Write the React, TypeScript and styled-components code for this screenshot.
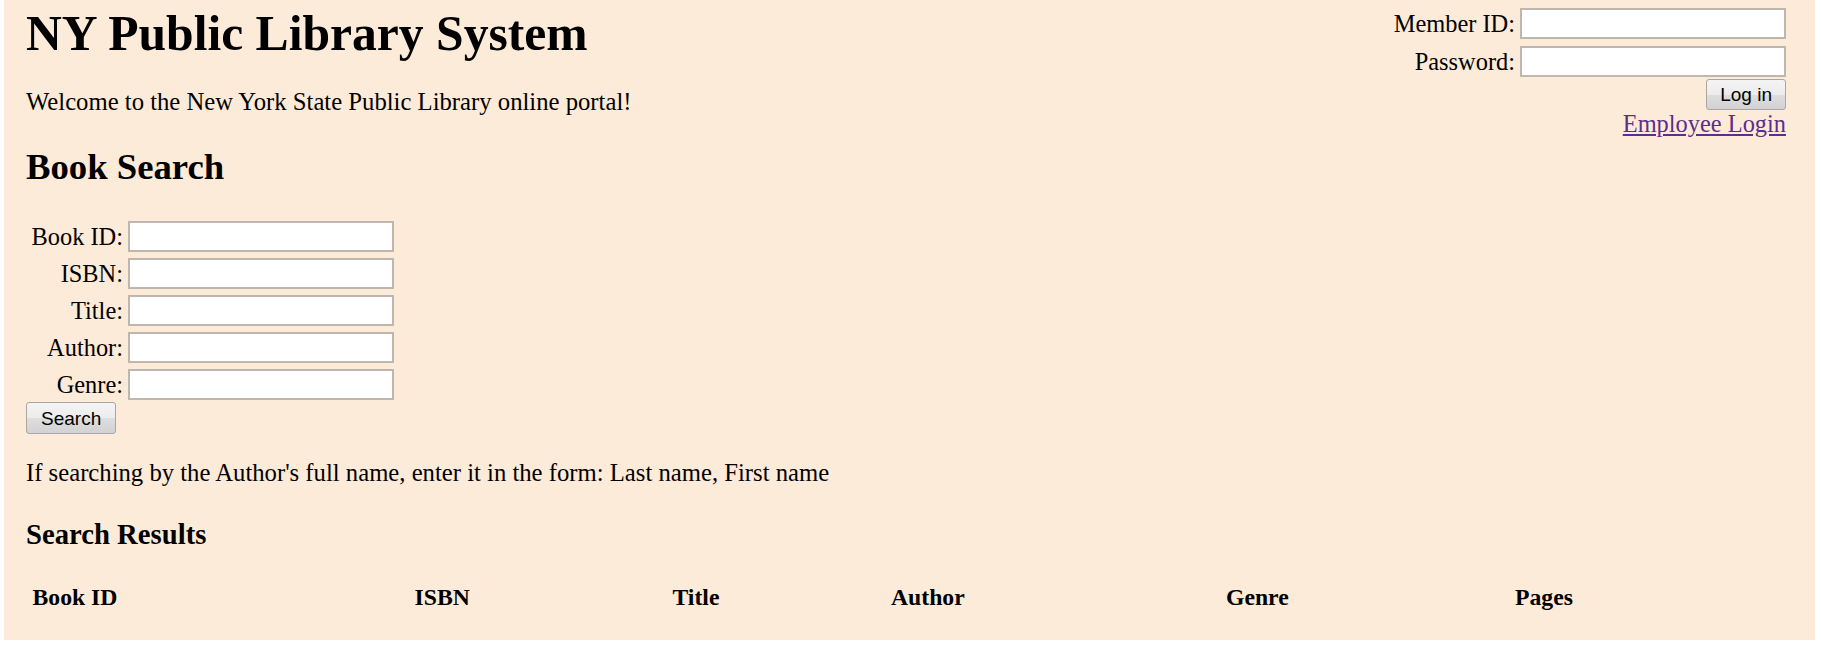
import React from "react";
import styled, { createGlobalStyle } from "styled-components";

const GlobalStyle = createGlobalStyle`
  html, body {
    margin: 0;
    padding: 0;
    background: #ffffff;
  }
  body {
    font-family: "Liberation Serif", "Times New Roman", serif;
    color: #000;
  }
`;

const Page = styled.div`
  box-sizing: border-box;
  width: 1811px;
  height: 640px;
  margin-left: 4px;
  padding: 0 29px 0 22px;
  background: #fdebd9;
  overflow: hidden;
  display: flex;
  flex-direction: column;
  align-items: flex-start;
`;

const Header = styled.header`
  align-self: stretch;
  display: flex;
  justify-content: space-between;
  align-items: flex-start;
`;

const Intro = styled.div`
  display: flex;
  flex-direction: column;
`;

const Title = styled.h1`
  margin: 6px 0 0;
  font-size: 49.6px;
  line-height: 56px;
  font-weight: bold;
`;

const BodyText = styled.p<{ $top: number }>`
  margin: ${(p) => p.$top}px 0 0;
  font-size: 24.7px;
  line-height: 27.6px;
`;

const LoginBox = styled.form`
  padding-top: 8px;
  display: flex;
  flex-direction: column;
  align-items: flex-end;
`;

const FieldGrid = styled.div<{ $label: string; $rowGap: number }>`
  display: grid;
  grid-template-columns: ${(p) => p.$label} 266px;
  column-gap: 5px;
  row-gap: ${(p) => p.$rowGap}px;
  align-items: center;
`;

const FieldLabel = styled.label`
  font-size: 24.4px;
  line-height: 27.6px;
  text-align: right;
  white-space: nowrap;
`;

const TextInput = styled.input`
  box-sizing: border-box;
  width: 266px;
  height: 31px;
  margin: 0;
  padding: 2px 4px;
  border: 2px solid #bfb7ad;
  background: #ffffff;
  font-family: "Liberation Sans", Arial, sans-serif;
  font-size: 18px;
`;

const Button = styled.button<{ $top: number; $h: number; $px: number }>`
  box-sizing: border-box;
  height: ${(p) => p.$h}px;
  margin: ${(p) => p.$top}px 0 0;
  padding: 0 ${(p) => p.$px}px;
  border: 1px solid #a7a7a7;
  border-radius: 3px;
  background: linear-gradient(#f4f4f4 0%, #ececec 50%, #dedede 51%, #d2d2d2 100%);
  color: #000;
  font-family: "Liberation Sans", Arial, sans-serif;
  font-size: 19px;
  line-height: 1;
`;

const EmployeeLink = styled.a`
  font-size: 24.4px;
  line-height: 27px;
  color: #5d2e8c;
  text-decoration: underline;
`;

const SectionTitle = styled.h2`
  margin: 9px 0 0;
  font-size: 36.7px;
  line-height: 1.15;
  font-weight: bold;
`;

const SearchForm = styled.form`
  margin-top: 33px;
  display: flex;
  flex-direction: column;
  align-items: flex-start;
`;

const ResultsTitle = styled.h3`
  margin: 31px 0 0;
  font-size: 28.7px;
  line-height: 1.15;
  font-weight: bold;
`;

const ResultsTable = styled.table`
  margin-top: 33px;
  width: 1764px;
  border-collapse: collapse;
  table-layout: fixed;
`;

const HeadCell = styled.th<{ $w?: number }>`
  box-sizing: border-box;
  width: ${(p) => (p.$w ? `${p.$w}px` : "auto")};
  padding: 0 0 0 6.5px;
  text-align: left;
  font-size: 23.7px;
  line-height: 27.6px;
  font-weight: bold;
`;

const searchFields = ["Book ID", "ISBN", "Title", "Author", "Genre"];

const columns: { name: string; w?: number }[] = [
  { name: "Book ID", w: 382 },
  { name: "ISBN", w: 258 },
  { name: "Title", w: 218.5 },
  { name: "Author", w: 335 },
  { name: "Genre", w: 289 },
  { name: "Pages" },
];

export default function App() {
  return (
    <>
      <GlobalStyle />
      <Page>
        <Header>
          <Intro>
            <Title>NY Public Library System</Title>
            <BodyText $top={26}>Welcome to the New York State Public Library online portal!</BodyText>
          </Intro>
          <LoginBox onSubmit={(e) => e.preventDefault()}>
            <FieldGrid $label="auto" $rowGap={7}>
              <FieldLabel htmlFor="member-id">Member ID:</FieldLabel>
              <TextInput id="member-id" type="text" />
              <FieldLabel htmlFor="password">Password:</FieldLabel>
              <TextInput id="password" type="password" />
            </FieldGrid>
            <Button type="submit" $top={2} $h={31} $px={13}>Log in</Button>
            <EmployeeLink href="#">Employee Login</EmployeeLink>
          </LoginBox>
        </Header>

        <SectionTitle>Book Search</SectionTitle>
        <SearchForm onSubmit={(e) => e.preventDefault()}>
          <FieldGrid $label="97px" $rowGap={6}>
            {searchFields.map((f) => (
              <React.Fragment key={f}>
                <FieldLabel htmlFor={`search-${f}`}>{f}:</FieldLabel>
                <TextInput id={`search-${f}`} type="text" />
              </React.Fragment>
            ))}
          </FieldGrid>
          <Button type="submit" $top={2} $h={32} $px={14}>Search</Button>
        </SearchForm>

        <BodyText $top={25}>If searching by the Author's full name, enter it in the form: Last name, First name</BodyText>

        <ResultsTitle>Search Results</ResultsTitle>
        <ResultsTable>
          <thead>
            <tr>
              {columns.map((c) => (
                <HeadCell key={c.name} $w={c.w}>{c.name}</HeadCell>
              ))}
            </tr>
          </thead>
        </ResultsTable>
      </Page>
    </>
  );
}
